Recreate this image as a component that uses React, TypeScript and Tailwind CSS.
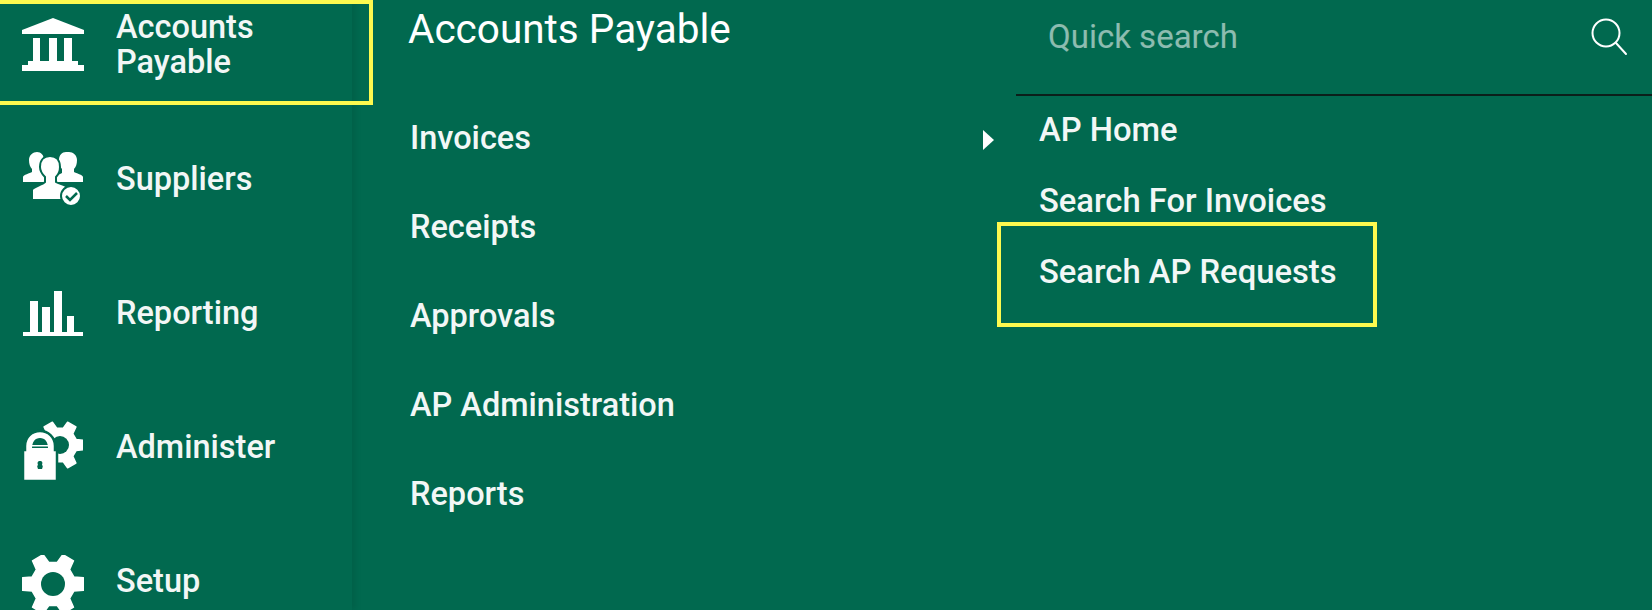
const bg = '#01694f';

// six-lobed gear outline used by the Administer and Setup icons
function gearPath(cx: number, cy: number, outer: number, inner: number) {
  const points: string[] = [];
  for (let i = 0; i < 6; i++) {
    const a = (i * Math.PI) / 3;
    [
      [a - 0.33, inner],
      [a - 0.2, outer],
      [a + 0.2, outer],
      [a + 0.33, inner],
    ].forEach(([t, r]) => {
      points.push(`${(cx + r * Math.cos(t)).toFixed(1)} ${(cy + r * Math.sin(t)).toFixed(1)}`);
    });
  }
  return `M${points.join('L')}Z`;
}

function BankIcon() {
  return (
    <svg viewBox="0 0 62 54" className="w-[62px] h-[54px]" fill="#fff">
      <path d="M31 0 62 12v4H0v-4z" />
      <path d="M11 20h7v23h-7zM27 20h8v23h-8zM42 20h8v23h-8z" />
      <path d="M6 43h50v4H6zM0 47h62v6H0z" />
    </svg>
  );
}

function SuppliersIcon() {
  return (
    <svg viewBox="0 0 62 54" className="w-[62px] h-[54px]" fill="#fff">
      <path d="M15 0c4 0 7 3 7 8 0 4-1 7-3 9v4l6 3v6H1v-5c0-2 7-4 9-5v-3c-2-2-3-5-3-9 0-5 4-8 8-8z" />
      <path d="M44 0c-4 0-7 3-7 8 0 4 1 7 3 9v4l-6 3v6h27v-5c0-2-7-4-9-5v-3c2-2 3-5 3-9 0-5-4-8-8-8z" />
      <path
        d="M28 4c6 0 10 4 10 11 0 4-1 7-4 10v5c3 2 10 3 13 6v12H10v-10c0-3 10-5 13-8v-5c-3-3-5-6-5-10 0-7 4-11 10-11z"
        stroke={bg}
        strokeWidth="2"
      />
      <circle cx="49" cy="44" r="10" stroke={bg} strokeWidth="2" />
      <path d="m44 44 4 4 7-7" fill="none" stroke={bg} strokeWidth="2.5" />
    </svg>
  );
}

function ReportingIcon() {
  return (
    <svg viewBox="0 0 60 45" className="w-[60px] h-[45px]" fill="#fff">
      <path d="M7 10h8v31H7zM19 16h8v25h-8zM31 0h8v41h-8zM44 25h7v16h-7z" />
      <path d="M0 41h60v4H0z" />
    </svg>
  );
}

function AdministerIcon() {
  return (
    <svg viewBox="0 0 60 61" className="w-[60px] h-[61px] mt-[7px]" fill="#fff">
      <path d={gearPath(37, 25, 24, 17)} stroke="#fff" strokeWidth="1.5" strokeLinejoin="round" />
      <circle cx="37" cy="25" r="9" fill={bg} />
      <path
        d="M0 61V30h2v-4C2 17 9 11 17 11s15 6 15 15v4h2v31z"
        stroke={bg}
        strokeWidth="2.5"
      />
      <path d="M9 28c0-6 3-10 8-10s8 4 8 10z" fill={bg} />
      <path d="M9 25h16v1.5H9z" fill="#fff" />
      <path d="M15 49c-1-3-1-3 0-4-1-3 0-4 2-4s3 1 2 4c1 1 1 1 0 4z" fill={bg} />
    </svg>
  );
}

function SetupIcon() {
  return (
    <svg viewBox="0 0 62 60" className="w-[62px] h-[60px] mt-[7px]">
      <path d={gearPath(31, 29, 31, 22)} fill="#fff" stroke="#fff" strokeWidth="1.5" strokeLinejoin="round" />
      <circle cx="31" cy="29" r="12" fill={bg} />
    </svg>
  );
}

function SearchIcon() {
  return (
    <svg viewBox="0 0 38 38" className="w-[38px] h-[38px]" fill="none" stroke="#fff" strokeWidth="2">
      <circle cx="16" cy="15" r="13.5" />
      <path d="m26 25 10 11" strokeLinecap="round" />
    </svg>
  );
}

const navItems = [
  { label: 'Suppliers', icon: <SuppliersIcon /> },
  { label: 'Reporting', icon: <ReportingIcon /> },
  { label: 'Administer', icon: <AdministerIcon /> },
  { label: 'Setup', icon: <SetupIcon /> },
];

const menuItems = ['Invoices', 'Receipts', 'Approvals', 'AP Administration', 'Reports'];

const linkItems = ['AP Home', 'Search For Invoices'];

export default function App() {
  return (
    <div className="w-[1652px] h-[610px] overflow-hidden flex bg-[#01694f] text-white font-['Roboto',sans-serif] font-medium">
      {/* Sidebar */}
      <nav className="w-[352px] shrink-0 relative shadow-[3px_0_7px_rgba(0,0,0,0.1)]">
        <div className="absolute left-0 top-0 w-[373px] h-[105px] border-[4px] border-l-0 border-[#fdf94f] z-10" />
        <div className="h-[104px] pl-[22px] pb-[14px] flex items-center gap-[32px] text-[32.5px] leading-[35px]">
          <BankIcon />
          <span className="opacity-95">
            Accounts
            <br />
            Payable
          </span>
        </div>
        <div className="pt-[8px]">
          {navItems.map((item) => (
            <div key={item.label} className="h-[134px] pl-[22px] flex items-center gap-[32px] text-[32.5px]">
              <div className="w-[62px] flex justify-center">{item.icon}</div>
              <span className="opacity-95">{item.label}</span>
            </div>
          ))}
        </div>
      </nav>

      {/* Menu column */}
      <div className="w-[610px] shrink-0 pl-[56px]">
        <h2 className="text-[40.5px] leading-[58px] font-normal">Accounts Payable</h2>
        <ul className="mt-[60px] flex flex-col gap-[49px] text-[32.5px] leading-[40px]">
          {menuItems.map((item) => (
            <li key={item} className="pl-[2px] opacity-95">
              {item}
            </li>
          ))}
        </ul>
      </div>

      {/* Right column */}
      <div className="flex-1 relative">
        <div className="h-[96px] border-b-2 border-[#0b1f1a] ml-[54px] pl-[32px] pr-[24px] flex items-center justify-between pb-[20px]">
          <span className="text-[33px] font-normal text-white/55">Quick search</span>
          <SearchIcon />
        </div>
        <span className="absolute left-[21px] top-[130px] w-0 h-0 border-y-[10px] border-y-transparent border-l-[11px] border-l-white" />
        <div className="pl-[77px] text-[32.75px] leading-[71px] mt-[-1px]">
          {linkItems.map((item) => (
            <div key={item} className="opacity-95">
              {item}
            </div>
          ))}
        </div>
        <div className="ml-[35px] w-[380px] h-[105px] border-[4px] border-[#fdf94f] pl-[38px] pt-[21px] text-[32.75px] leading-[50px] mt-[-15px]">
          <span className="opacity-95">Search AP Requests</span>
        </div>
      </div>
    </div>
  );
}
